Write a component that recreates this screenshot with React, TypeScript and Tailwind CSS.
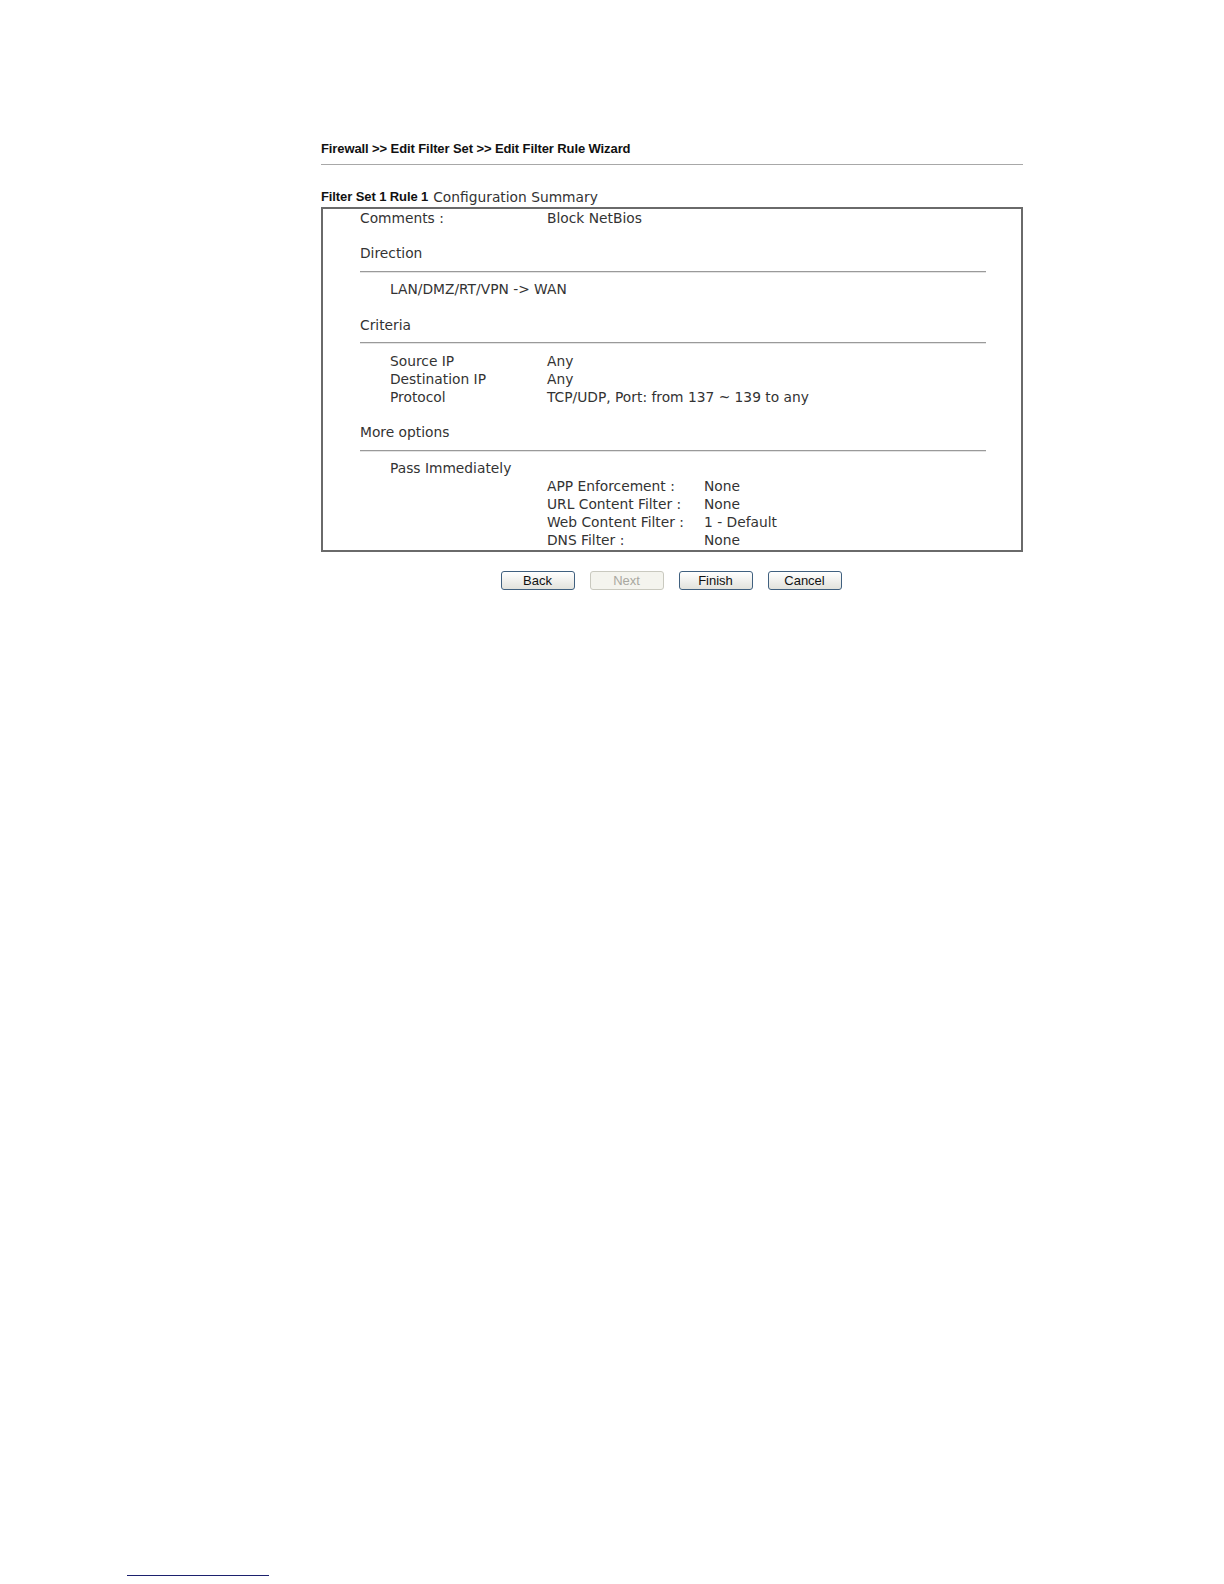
const body = "font-['DejaVu_Sans',Verdana,sans-serif] text-[13.8px] text-[#333]";
const bold = "font-['Liberation_Sans',Arial,sans-serif] text-[13px] font-bold text-[#111]";

function Row({ label, value, indent }: { label: string; value?: string; indent?: boolean }) {
  return (
    <div className={`flex h-[18px] items-center whitespace-nowrap ${indent ? "pl-[30px]" : ""}`}>
      <span className={indent ? "w-[157px]" : "w-[187px]"}>{label}</span>
      {value && <span>{value}</span>}
    </div>
  );
}

function SubRow({ label, value }: { label: string; value: string }) {
  return (
    <div className="flex h-[18px] items-center whitespace-nowrap pl-[187px]">
      <span className="w-[157px]">{label}</span>
      <span>{value}</span>
    </div>
  );
}

function Section({ title, children }: { title: string; children: React.ReactNode }) {
  return (
    <div className="mt-[17.6px]">
      <div className="flex h-[18px] items-center">{title}</div>
      <div className="mt-[8px] border-t border-t-[#9a9a9a] border-b border-b-[#e4e4e4]" />
      <div className="mt-[8px]">{children}</div>
    </div>
  );
}

function Button({ label, disabled }: { label: string; disabled?: boolean }) {
  return (
    <button
      disabled={disabled}
      className={
        disabled
          ? "h-[19px] w-[74px] rounded-[3px] border border-[#c9c9bf] bg-[#f4f4ee] font-['Liberation_Sans',Arial,sans-serif] text-[13px] leading-none text-[#a8a8a0]"
          : "h-[19px] w-[74px] rounded-[3px] border border-[#40607f] bg-gradient-to-b from-white to-[#e2e2dc] font-['Liberation_Sans',Arial,sans-serif] text-[13px] leading-none text-[#111]"
      }
    >
      {label}
    </button>
  );
}

export default function App() {
  return (
    <div className="flex h-[1584px] flex-col bg-white">
      <div className="ml-[321px] w-[702px] pt-[141px]">
        <div className={`${bold} leading-[16px] tracking-[-0.1px]`}>
          Firewall &gt;&gt; Edit Filter Set &gt;&gt; Edit Filter Rule Wizard
        </div>
        <div className="mt-[7px] border-t border-[#a8a8a8]" />

        <div className="mt-[24px] flex h-[16px] items-center">
          <span className={`${bold} tracking-[-0.1px]`}>Filter Set 1 Rule 1</span>
          <span className={`ml-[5px] ${body}`}>Configuration Summary</span>
        </div>

        <div className={`mt-[2px] border-2 border-[#6a6a6a] pl-[37px] pr-[35px] ${body}`}>
          <Row label="Comments :" value="Block NetBios" />
          <Section title="Direction">
            <Row label="LAN/DMZ/RT/VPN -> WAN" indent />
          </Section>
          <Section title="Criteria">
            <Row label="Source IP" value="Any" indent />
            <Row label="Destination IP" value="Any" indent />
            <Row label="Protocol" value="TCP/UDP, Port: from 137 ~ 139 to any" indent />
          </Section>
          <Section title="More options">
            <Row label="Pass Immediately" indent />
            <SubRow label="APP Enforcement :" value="None" />
            <SubRow label="URL Content Filter :" value="None" />
            <SubRow label="Web Content Filter :" value="1 - Default" />
            <SubRow label="DNS Filter :" value="None" />
          </Section>
        </div>

        <div className="mt-[19px] flex justify-center gap-[15px] pr-[2px]">
          <Button label="Back" />
          <Button label="Next" disabled />
          <Button label="Finish" />
          <Button label="Cancel" />
        </div>
      </div>

      <div className="mb-[8px] ml-[127px] mt-auto w-[142px] border-t border-[#1c216e]" />
    </div>
  );
}
